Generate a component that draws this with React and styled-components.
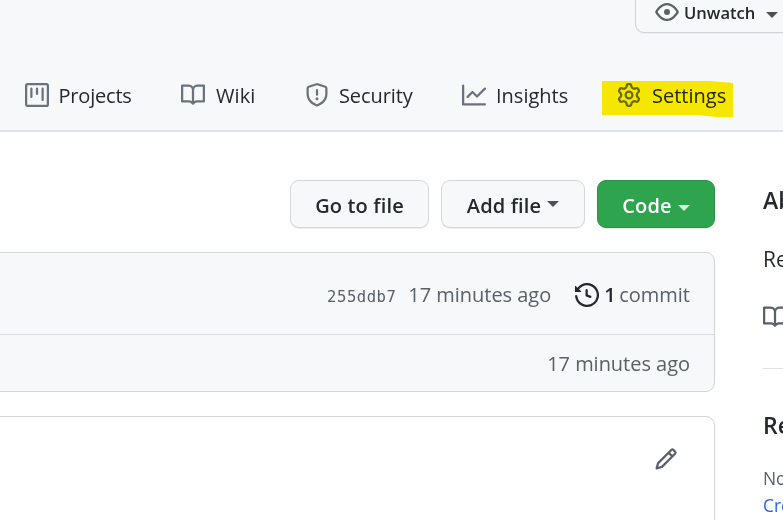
import React from 'react';
import styled, { createGlobalStyle } from 'styled-components';

const GlobalStyle = createGlobalStyle`
  *, *::before, *::after { box-sizing: border-box; }
  body {
    margin: 0;
    overflow: hidden;
    background: #ffffff;
    color: #24292e;
    font-family: "Open Sans", "Noto Sans", sans-serif;
    font-size: 20px;
    line-height: 30px;
  }
`;

const ICONS = {
  project:
    'M1.75 0A1.75 1.75 0 000 1.75v12.5C0 15.216.784 16 1.75 16h12.5A1.75 1.75 0 0016 14.25V1.75A1.75 1.75 0 0014.25 0H1.75zM1.5 1.75a.25.25 0 01.25-.25h12.5a.25.25 0 01.25.25v12.5a.25.25 0 01-.25.25H1.75a.25.25 0 01-.25-.25V1.75zM11.75 3a.75.75 0 00-.75.75v7.5a.75.75 0 001.5 0v-7.5a.75.75 0 00-.75-.75zm-8.25.75a.75.75 0 011.5 0v5.5a.75.75 0 01-1.5 0v-5.5zM8 3a.75.75 0 00-.75.75v3.5a.75.75 0 001.5 0v-3.5A.75.75 0 008 3z',
  book:
    'M0 1.75A.75.75 0 01.75 1h4.253c1.227 0 2.317.59 3 1.501A3.744 3.744 0 0111.006 1h4.245a.75.75 0 01.75.75v10.5a.75.75 0 01-.75.75h-4.507a2.25 2.25 0 00-1.591.659l-.622.621a.75.75 0 01-1.06 0l-.622-.621A2.25 2.25 0 005.258 13H.75a.75.75 0 01-.75-.75V1.75zm8.755 3a2.25 2.25 0 012.25-2.25H14.5v9h-3.757c-.71 0-1.4.201-1.992.572l.004-7.322zm-1.504 7.324l.004-5.073-.002-2.253A2.25 2.25 0 005.003 2.5H1.5v9h3.757a3.75 3.75 0 011.994.574z',
  shield:
    'M7.467.133a1.75 1.75 0 011.066 0l5.25 1.68A1.75 1.75 0 0115 3.48V7c0 1.566-.32 3.182-1.303 4.682-.983 1.498-2.585 2.813-5.032 3.855a1.7 1.7 0 01-1.33 0c-2.447-1.042-4.049-2.357-5.032-3.855C1.32 10.182 1 8.566 1 7V3.48a1.75 1.75 0 011.217-1.667l5.25-1.68zm.61 1.429a.25.25 0 00-.153 0l-5.25 1.68a.25.25 0 00-.174.238V7c0 1.358.275 2.666 1.057 3.86.784 1.194 2.121 2.34 4.366 3.297a.2.2 0 00.154 0c2.245-.956 3.582-2.104 4.366-3.298C13.225 9.666 13.5 8.36 13.5 7V3.48a.25.25 0 00-.174-.237l-5.25-1.68zM9 10.5a1 1 0 11-2 0 1 1 0 012 0zm-.25-5.75a.75.75 0 10-1.5 0v3a.75.75 0 001.5 0v-3z',
  graph:
    'M1.5 1.75a.75.75 0 00-1.5 0v12.5c0 .414.336.75.75.75h14.5a.75.75 0 000-1.5H1.5V1.75zm14.28 2.53a.75.75 0 00-1.06-1.06L10 7.94 7.53 5.47a.75.75 0 00-1.06 0L3.22 8.72a.75.75 0 001.06 1.06L7 7.06l2.47 2.47a.75.75 0 001.06 0l5.25-5.25z',
  gear:
    'M7.429 1.525a6.593 6.593 0 011.142 0c.036.003.108.036.137.146l.289 1.105c.147.56.55.967.997 1.189.174.086.341.183.501.29.417.278.97.423 1.53.27l1.102-.303c.11-.03.175.016.195.046.219.31.41.641.573.989.014.031.022.11-.059.19l-.815.806c-.411.406-.562.957-.53 1.456a4.588 4.588 0 010 .582c-.032.499.119 1.05.53 1.456l.815.806c.08.08.073.159.059.19a6.494 6.494 0 01-.573.99c-.02.029-.086.074-.195.045l-1.103-.303c-.559-.153-1.112-.008-1.529.27-.16.107-.327.204-.5.29-.449.222-.851.628-.998 1.189l-.289 1.105c-.029.11-.101.143-.137.146a6.613 6.613 0 01-1.142 0c-.036-.003-.108-.037-.137-.146l-.289-1.105c-.147-.56-.55-.967-.997-1.189a4.502 4.502 0 01-.501-.29c-.417-.278-.97-.423-1.53-.27l-1.102.303c-.11.03-.175-.016-.195-.046a6.492 6.492 0 01-.573-.989c-.014-.031-.022-.11.059-.19l.815-.806c.411-.406.562-.957.53-1.456a4.587 4.587 0 010-.582c.032-.499-.119-1.05-.53-1.456l-.815-.806c-.08-.08-.073-.159-.059-.19a6.44 6.44 0 01.573-.99c.02-.029.086-.075.195-.045l1.103.303c.559.153 1.112.008 1.529-.27.16-.107.327-.204.5-.29.449-.222.851-.628.998-1.189l.289-1.105c.029-.11.101-.143.137-.146zM8 0c-.236 0-.47.01-.701.03-.743.065-1.29.615-1.458 1.261l-.29 1.106c-.017.066-.078.158-.211.224a5.994 5.994 0 00-.668.386c-.123.082-.233.09-.3.071L3.27 2.776c-.644-.177-1.392.02-1.82.63a7.977 7.977 0 00-.704 1.217c-.315.675-.111 1.422.363 1.891l.815.806c.05.048.098.147.088.294a6.084 6.084 0 000 .772c.01.147-.038.246-.088.294l-.815.806c-.474.469-.678 1.216-.363 1.891.2.428.436.835.704 1.218.428.609 1.176.806 1.82.63l1.103-.303c.066-.019.176-.011.299.071.213.143.436.272.668.386.133.066.194.158.212.224l.289 1.106c.169.646.715 1.196 1.458 1.26a8.094 8.094 0 001.402 0c.743-.064 1.29-.614 1.458-1.26l.29-1.106c.017-.066.078-.158.211-.224a5.98 5.98 0 00.668-.386c.123-.082.233-.09.3-.071l1.102.302c.644.177 1.392-.02 1.82-.63.268-.382.505-.789.704-1.217.315-.675.111-1.422-.364-1.891l-.814-.806c-.05-.048-.098-.147-.088-.294a6.1 6.1 0 000-.772c-.01-.147.039-.246.088-.294l.814-.806c.475-.469.679-1.216.364-1.891a7.992 7.992 0 00-.704-1.218c-.428-.609-1.176-.806-1.82-.63l-1.103.303c-.066.019-.176.011-.299-.071a5.991 5.991 0 00-.668-.386c-.133-.066-.194-.158-.212-.224L10.16 1.29C9.99.645 9.444.095 8.701.031A8.094 8.094 0 008 0zm1.5 8a1.5 1.5 0 11-3 0 1.5 1.5 0 013 0zM11 8a3 3 0 11-6 0 3 3 0 016 0z',
  eye:
    'M1.679 7.932c.412-.621 1.242-1.75 2.366-2.717C5.175 4.242 6.527 3.5 8 3.5c1.473 0 2.824.742 3.955 1.715 1.124.967 1.954 2.096 2.366 2.717a.119.119 0 010 .136c-.412.621-1.242 1.75-2.366 2.717C10.825 11.758 9.473 12.5 8 12.5c-1.473 0-2.824-.742-3.955-1.715C2.92 9.818 2.09 8.69 1.679 8.068a.119.119 0 010-.136zM8 2c-1.981 0-3.67.992-4.933 2.078C1.797 5.169.88 6.423.43 7.1a1.619 1.619 0 000 1.798c.45.678 1.367 1.932 2.637 3.024C4.329 13.008 6.019 14 8 14c1.981 0 3.67-.992 4.933-2.078 1.27-1.091 2.187-2.345 2.637-3.023a1.619 1.619 0 000-1.798c-.45-.678-1.367-1.932-2.637-3.023C11.671 2.992 9.981 2 8 2zm0 8a2 2 0 100-4 2 2 0 000 4z',
  history:
    'M1.643 3.143L.427 1.927A.25.25 0 000 2.104V5.75c0 .138.112.25.25.25h3.646a.25.25 0 00.177-.427L2.715 4.215a6.5 6.5 0 11-1.18 4.458.75.75 0 10-1.493.154 8.001 8.001 0 101.6-5.684zM7.75 4a.75.75 0 01.75.75v2.992l2.028.812a.75.75 0 01-.557 1.392l-2.5-1A.75.75 0 017 8.25v-3.5A.75.75 0 017.75 4z',
  pencil:
    'M11.013 1.427a1.75 1.75 0 012.474 0l1.086 1.086a1.75 1.75 0 010 2.474l-8.61 8.61c-.21.21-.47.364-.756.445l-3.251.93a.75.75 0 01-.927-.928l.929-3.25a1.75 1.75 0 01.445-.758l8.61-8.61zm1.414 1.06a.25.25 0 00-.354 0L10.811 3.75l1.439 1.44 1.263-1.263a.25.25 0 000-.354l-1.086-1.086zM11.189 6.25L9.75 4.81l-6.286 6.287a.25.25 0 00-.064.108l-.558 1.953 1.953-.558a.249.249 0 00.108-.064l6.286-6.286z',
};

const Glyph = styled.svg`
  flex: none;
  width: 24px;
  height: 24px;
  fill: ${(p) => p.$color};
`;

function Icon({ name, color = '#586069' }) {
  return (
    <Glyph viewBox="0 0 16 16" $color={color} aria-hidden="true">
      <path fillRule="evenodd" clipRule="evenodd" d={ICONS[name]} />
    </Glyph>
  );
}

const Page = styled.div`
  width: 783px;
  height: 520px;
  overflow: hidden;
  white-space: nowrap;
`;

const Header = styled.header`
  display: flex;
  flex-direction: column;
  justify-content: space-between;
  height: 132px;
  background: #f6f8fa;
  border-bottom: 2px solid #dfe2e8;
`;

const WatchButton = styled.button`
  align-self: flex-end;
  display: flex;
  align-items: center;
  width: 160px;
  height: 48px;
  margin: -15px -12px 0 0;
  padding: 6px 0 0 19px;
  background: #f6f8fa;
  border: 1px solid #d0d3d7;
  border-radius: 9px;
  box-shadow: 0 1px 0 rgba(27, 31, 35, 0.04);
  color: #24292e;
  font: 600 16.6px/24px "Open Sans", sans-serif;
`;

const WatchLabel = styled.span`
  margin: 0 11px 0 5px;
  padding-top: 2px;
`;

const Caret = styled.span`
  flex: none;
  width: 0;
  height: 0;
  margin-top: ${(p) => p.$drop || 0}px;
  border: 6px solid transparent;
  border-top-color: ${(p) => p.$color || '#4c5157'};
  border-bottom: 0;
`;

const Nav = styled.nav`
  display: flex;
  height: 48px;
  margin-bottom: 11px;
  padding-left: 25px;
`;

const Tab = styled.a`
  position: relative;
  flex: none;
  display: flex;
  align-items: center;
  gap: ${(p) => p.$gap}px;
  width: ${(p) => p.$width}px;
  letter-spacing: ${(p) => p.$tracking || 0}px;
`;

const TabLabel = styled.span`
  padding-top: 2px;
`;

const Highlighter = styled.span`
  position: absolute;
  top: 10px;
  left: -15px;
  width: 131px;
  height: 36px;
  background: #ffee00;
  clip-path: polygon(0 0, 82% 0, 100% 2px, 100% 100%, 88% 100%, 72% 34px, 0 34px);
  mix-blend-mode: multiply;
`;

const Main = styled.main`
  display: flex;
  gap: 48px;
  padding-top: 48px;
`;

const Files = styled.section`
  flex: none;
  width: 715px;
`;

const Toolbar = styled.div`
  display: flex;
  justify-content: flex-end;
  gap: 12px;
  height: 48px;
`;

const Button = styled.button`
  display: flex;
  align-items: center;
  justify-content: center;
  gap: 6px;
  width: ${(p) => p.$width}px;
  height: 48px;
  padding: 4px 0 0;
  background: ${(p) => (p.$primary ? '#2ea44f' : '#f6f8fa')};
  border: 1px solid ${(p) => (p.$primary ? '#2a9147' : '#d5d8db')};
  border-radius: 9px;
  box-shadow: 0 1px 0 rgba(27, 31, 35, 0.08);
  color: ${(p) => (p.$primary ? '#ffffff' : '#24292e')};
  font: 560 20px/30px "Open Sans", sans-serif;
  letter-spacing: 0.15px;
`;

const Panel = styled.div`
  height: ${(p) => p.$height}px;
  margin: 24px 0 0 -12px;
  background: ${(p) => p.$background};
  border: 1px solid #d1d5da;
  border-radius: 9px;
`;

const CommitRow = styled.div`
  display: flex;
  align-items: center;
  justify-content: flex-end;
  height: ${(p) => p.$height}px;
  padding: 2px 24px 0 0;
  border-top: ${(p) => (p.$divided ? '1px solid #d8dee4' : '0')};
  color: #586069;
`;

const Hash = styled.code`
  margin-right: 12px;
  padding-top: 4px;
  font: 15.6px/24px "DejaVu Sans Mono", monospace;
  letter-spacing: 0.5px;
`;

const Time = styled.time`
  letter-spacing: -0.03px;
`;

const Commits = styled.span`
  display: flex;
  align-items: center;
  gap: 5px;
  margin-left: 24px;
`;

const Count = styled.strong`
  color: #24292e;
  font-weight: 600;
  width: 10px;
`;

const EditRow = styled.div`
  display: flex;
  justify-content: flex-end;
  padding: 30px 36px 0 0;
`;

const Sidebar = styled.aside`
  flex: none;
  width: 360px;
  display: flex;
  flex-direction: column;
`;

const Heading = styled.h2`
  margin: 2px 0 0;
  font-size: 23px;
  font-weight: 580;
  line-height: 36px;
`;

const Description = styled.p`
  margin: 26px 0 31px;
  font-size: 21px;
`;

const Divider = styled.hr`
  width: 100%;
  margin: 39px 0 36px;
  border: 0;
  border-top: 1px solid #dde0e5;
`;

const Note = styled.span`
  margin-top: ${(p) => p.$top || 0}px;
  color: ${(p) => p.$color};
  font-size: 17.4px;
  line-height: 27px;
`;

const TABS = [
  { icon: 'project', label: 'Projects', width: 156, gap: 9.5, tracking: -0.2 },
  { icon: 'book', label: 'Wiki', width: 124, gap: 11, tracking: 0.1 },
  { icon: 'shield', label: 'Security', width: 157, gap: 10, tracking: -0.1 },
  { icon: 'graph', label: 'Insights', width: 155, gap: 10 },
  { icon: 'gear', label: 'Settings', width: 120, gap: 11, marked: true },
];

export default function App() {
  return (
    <Page>
      <GlobalStyle />
      <Header>
        <WatchButton>
          <Icon name="eye" />
          <WatchLabel>Unwatch</WatchLabel>
          <Caret $drop={5} />
        </WatchButton>
        <Nav>
          {TABS.map((t) => (
            <Tab key={t.label} $width={t.width} $gap={t.gap} $tracking={t.tracking}>
              <Icon name={t.icon} color="#6a737d" />
              <TabLabel>{t.label}</TabLabel>
              {t.marked && <Highlighter />}
            </Tab>
          ))}
        </Nav>
      </Header>
      <Main>
        <Files>
          <Toolbar>
            <Button $width={139}>Go to file</Button>
            <Button $width={144}>
              Add file <Caret $drop={-5} />
            </Button>
            <Button $width={118} $primary>
              Code <Caret $drop={4} $color="#d5edda" />
            </Button>
          </Toolbar>
          <Panel $height={140} $background="#f6f8fa">
            <CommitRow $height={81}>
              <Hash>255ddb7</Hash>
              <Time>17 minutes ago</Time>
              <Commits>
                <Icon name="history" color="#24292e" />
                <Count>1</Count>
                <span>commit</span>
              </Commits>
            </CommitRow>
            <CommitRow $height={57} $divided>
              <Time>17 minutes ago</Time>
            </CommitRow>
          </Panel>
          <Panel $height={160} $background="#ffffff">
            <EditRow>
              <Icon name="pencil" />
            </EditRow>
          </Panel>
        </Files>
        <Sidebar>
          <Heading>About</Heading>
          <Description>Repository</Description>
          <Icon name="book" />
          <Divider />
          <Heading>Releases</Heading>
          <Note $top={22} $color="#586069">No releases published</Note>
          <Note $color="#2f62d8">Create a new release</Note>
        </Sidebar>
      </Main>
    </Page>
  );
}
